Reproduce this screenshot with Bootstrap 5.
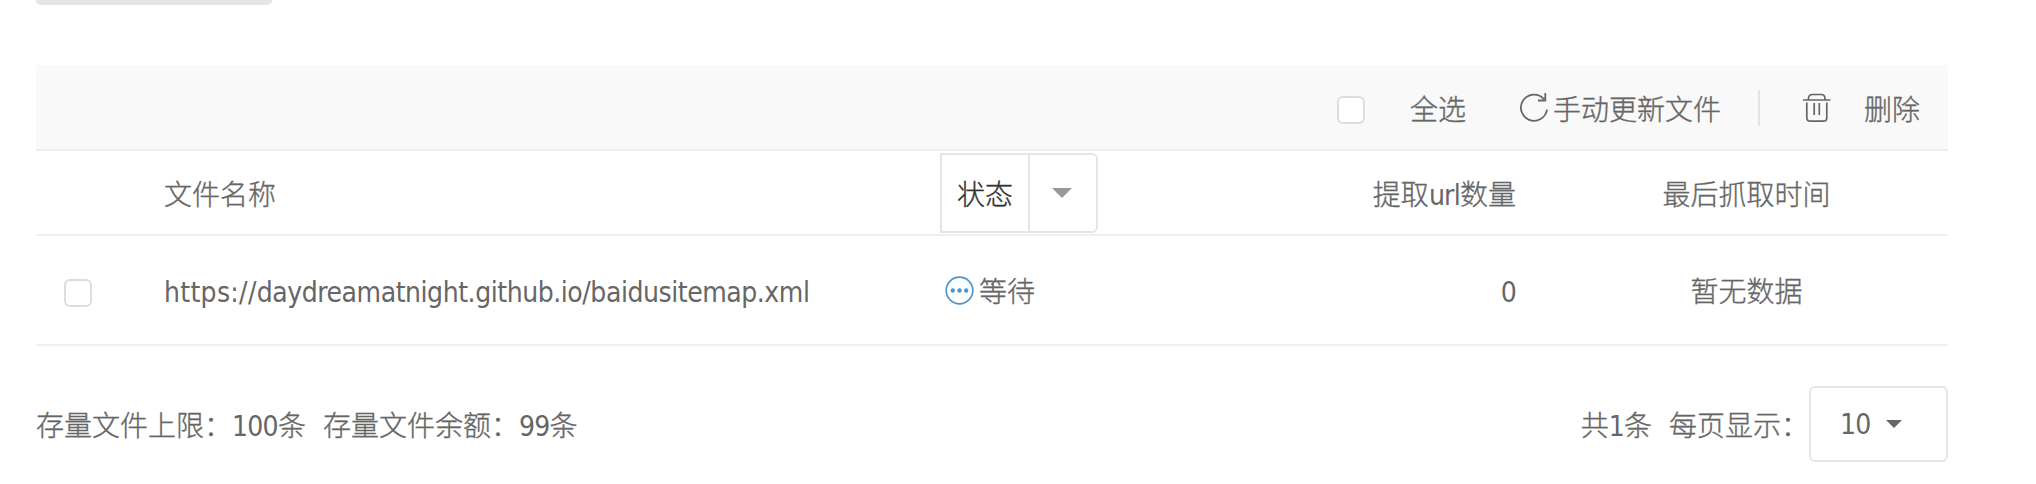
<!DOCTYPE html>
<html lang="zh-CN">
<head>
<meta charset="utf-8">
<meta name="viewport" content="width=device-width, initial-scale=1">
<title>Sitemap</title>
<link href="https://cdn.jsdelivr.net/npm/bootstrap@5.3.0/dist/css/bootstrap.min.css" rel="stylesheet">
<style>
  body { font-family: "Noto Sans CJK SC", sans-serif; font-size: 28px; font-weight: 300; line-height: 40px; color: #666; background: #fff; overflow: hidden; -webkit-text-stroke: .35px; }
  .page { width: 1912px; margin-left: 36px; }
  .latin { font-family: "DejaVu Sans Condensed", "DejaVu Sans", sans-serif; font-stretch: condensed; font-weight: 400; letter-spacing: -.74px; line-height: 1; -webkit-text-stroke: 0; }
  .url-text { letter-spacing: -.45px; }
  .url-scheme { letter-spacing: .3px; }
  .tab-end { width: 236px; height: 5px; background: #e5e5e5; border-radius: 0 0 6px 6px; margin-bottom: 60px; }
  .toolbar { height: 86px; background: #f9f9f9; border-bottom: 2px solid #efefef; padding: 2px 28px 0 0; }
  .form-check-input.box { width: 28px; height: 28px; margin: 4px 0 0; border: 2px solid #ddd; border-radius: 6px; display: block; background-color: #fff; }
  .form-check-input.row-box { margin: 6px 0 0 28px; }
  .all-label { margin: 0 53px 0 45px; }
  .refresh-text { margin-left: 4px; }
  .delete-text { margin-left: 33px; }
  .rule { width: 2px; height: 36px; background: #e3e3e3; margin: 0 42px 0 37px; }
  .files { table-layout: fixed; color: #666; }
  .files > :not(caption) > * > * { padding: 0; border-bottom: 2px solid #efefef; color: #666; font-weight: 300; background: none; box-shadow: none; vertical-align: middle; }
  .files thead tr { height: 84px; }
  .files tbody tr { height: 110px; }
  .state { width: 158px; height: 80px; border: 2px solid #e5e5e5; border-radius: 0 6px 6px 0; color: #333; }
  .state-name { width: 88px; border-right: 2px solid #e5e5e5; padding-left: 15px; }
  .state-caret { border: 10px solid transparent; border-top-color: #999; border-bottom: 0; margin-left: 22px; }
  .files .num { padding-right: 30px; }
  .files .when { padding-right: 1px; }
  .wait { padding-left: 5px; }
  .wait-text { margin-left: 5px; }
  .summary { margin-top: 40px; }
  .size-select { width: 139px; height: 76px; border: 2px solid #e5e5e5; border-radius: 6px; padding-left: 29px; }
  .size-select .latin { padding-top: 2px; }
  .size-caret { border: 8px solid transparent; border-top-color: #666; border-bottom: 0; margin-left: 15px; }
  .gap-text { margin-left: 17px; }
</style>
</head>
<body>
<main class="page">
  <div class="tab-end"></div>
  <div class="toolbar d-flex align-items-center justify-content-end">
    <input class="form-check-input box" type="checkbox" id="all">
    <label for="all" class="all-label">全选</label>
    <svg width="30" height="30" viewBox="0 0 30 30" fill="none" stroke="#666" stroke-width="1.800"><path d="M25 6.200A13.100 13.100 0 1 0 28 16.500M26.300 0v7.500H19"/></svg>
    <span class="refresh-text">手动更新文件</span>
    <span class="rule"></span>
    <svg width="29" height="30" viewBox="0 0 29 30" fill="none" stroke="#666" stroke-width="1.700"><path d="M1 7h27.500M6.500 6.500V5.500q0-4 4-4h8.500q4 0 4 4v1M4.800 9.500v15q0 3.700 3.500 3.700h13q3.500 0 3.500-3.700V9.500M12.200 10v12M17.300 10v12"/></svg>
    <span class="delete-text">删除</span>
  </div>
  <table class="table files mb-0">
    <colgroup><col width="128"><col width="776"><col width="230"><col width="376"><col width="402"></colgroup>
    <thead>
      <tr>
        <th></th><th>文件名称</th>
        <th><div class="state d-flex"><span class="state-name d-flex align-items-center">状态</span><span class="d-flex align-items-center"><i class="state-caret"></i></span></div></th>
        <th class="num text-end">提取<span class="latin">url</span>数量</th>
        <th class="when text-center">最后抓取时间</th>
      </tr>
    </thead>
    <tbody>
      <tr>
        <td><input class="form-check-input box row-box" type="checkbox"></td>
        <td><span class="latin url-text"><span class="url-scheme">https://</span>daydreamatnight.github.io/baidusitemap.xml</span></td>
        <td><div class="d-flex align-items-center wait"><svg width="29" height="29" viewBox="0 0 29 29"><circle cx="14.500" cy="14.500" r="13.300" fill="none" stroke="#4b96d1" stroke-width="1.700"/><g fill="#4b96d1"><circle cx="7.800" cy="14.500" r="2.200"/><circle cx="14.500" cy="14.500" r="2.200"/><circle cx="21.200" cy="14.500" r="2.200"/></g></svg><span class="wait-text">等待</span></div></td>
        <td class="num text-end"><span class="latin">0</span></td>
        <td class="when text-center">暂无数据</td>
      </tr>
    </tbody>
  </table>
  <div class="summary d-flex align-items-center">
    <span>存量文件上限：<span class="latin">100</span>条</span>
    <span class="gap-text">存量文件余额：<span class="latin">99</span>条</span>
    <span class="ms-auto">共<span class="latin">1</span>条</span>
    <span class="gap-text">每页显示：</span>
    <div class="size-select d-flex align-items-center"><span class="latin">10</span><i class="size-caret"></i></div>
  </div>
</main>
<script src="https://cdn.jsdelivr.net/npm/bootstrap@5.3.0/dist/js/bootstrap.bundle.min.js"></script>
</body>
</html>
